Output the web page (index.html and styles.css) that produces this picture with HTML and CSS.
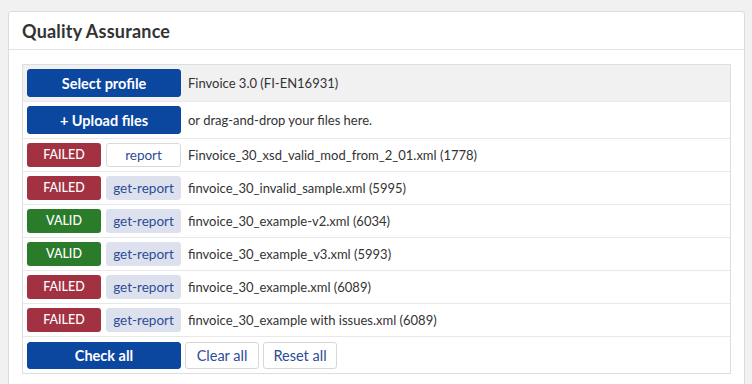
FILE: index.html
```html
<!DOCTYPE html>
<html>
<head>
<meta charset="utf-8">
<link rel="stylesheet" href="styles.css">
</head>
<body>
<section class="card">
  <header class="card-head">Quality Assurance</header>
  <div class="card-body">
    <div class="qa-table">
      <div class="row row-grey row-tall">
        <button class="btn btn-primary">Select profile</button>
        <span class="txt">Finvoice 3.0 (FI-EN16931)</span>
      </div>
      <div class="row row-tall">
        <button class="btn btn-primary">+ Upload files</button>
        <span class="txt">or drag-and-drop your files here.</span>
      </div>
      <div class="row">
        <span class="badge failed">FAILED</span>
        <button class="btn btn-report">report</button>
        <span class="txt">Finvoice_30_xsd_valid_mod_from_2_01.xml (1778)</span>
      </div>
      <div class="row">
        <span class="badge failed">FAILED</span>
        <button class="btn btn-get">get-report</button>
        <span class="txt">finvoice_30_invalid_sample.xml (5995)</span>
      </div>
      <div class="row">
        <span class="badge valid">VALID</span>
        <button class="btn btn-get">get-report</button>
        <span class="txt">finvoice_30_example-v2.xml (6034)</span>
      </div>
      <div class="row">
        <span class="badge valid">VALID</span>
        <button class="btn btn-get">get-report</button>
        <span class="txt">finvoice_30_example_v3.xml (5993)</span>
      </div>
      <div class="row">
        <span class="badge failed">FAILED</span>
        <button class="btn btn-get">get-report</button>
        <span class="txt">finvoice_30_example.xml (6089)</span>
      </div>
      <div class="row">
        <span class="badge failed">FAILED</span>
        <button class="btn btn-get">get-report</button>
        <span class="txt">finvoice_30_example with issues.xml (6089)</span>
      </div>
      <div class="row row-actions">
        <button class="btn btn-primary btn-check">Check all</button>
        <button class="btn btn-light">Clear all</button>
        <button class="btn btn-light">Reset all</button>
      </div>
    </div>
  </div>
</section>
</body>
</html>
```

FILE: styles.css
```css
html, body {
  margin: 0;
  padding: 0;
  background: #f1f1f1;
  font-family: "Lato", "Noto Sans", sans-serif;
  color: #333;
  overflow: hidden;
}
body {
  padding-top: 11px;
}
.card {
  margin: 0 7px 0 8px;
  background: #fff;
  border: 1px solid #dcdcdc;
  border-radius: 3px;
}
.card-head {
  height: 37px;
  line-height: 38px;
  padding: 0 13px;
  font-size: 18px;
  font-weight: 700;
  letter-spacing: 0.2px;
  color: #333;
  border-bottom: 1px solid #e3e3e3;
}
.card-body {
  padding: 14px 13px 20px 13px;
}
.qa-table {
  border: 1px solid #dedede;
}
.row {
  display: flex;
  align-items: center;
  height: 32px;
  padding: 0 4px;
  border-top: 1px solid #e8e8e8;
}
.row:first-child { border-top: 0; }
.row-grey { background: #f1f1f1; }
.row-tall { height: 36px; }
.row-actions { height: 36px; }
.btn {
  font-family: inherit;
  font-size: 14px;
  border-radius: 3px;
  padding: 0;
  cursor: pointer;
}
.btn-primary {
  width: 154px;
  height: 28px;
  background: #0b469f;
  color: #fff;
  border: 1px solid #0b469f;
  font-weight: 700;
  font-size: 14.5px;
}
.btn-check { height: 27px; }
.badge {
  width: 74px;
  height: 24px;
  line-height: 24px;
  text-align: center;
  color: #fff;
  border-radius: 3px;
  font-size: 12.5px;
  font-weight: 500;
}
.failed { background: #a23241; }
.valid { background: #2a7c2b; }
.btn-report, .btn-get {
  width: 75px;
  height: 24px;
  margin-left: 5px;
  font-size: 13.5px;
  color: #2b4c97;
}
.btn-report {
  background: #fff;
  border: 1px solid #dadada;
}
.btn-get {
  background: #dde1ee;
  border: 1px solid #dde1ee;
}
.txt {
  margin-left: 7px;
  font-size: 13px;
  color: #333;
}
.btn-light {
  height: 27px;
  width: 74px;
  margin-left: 4px;
  background: #fff;
  border: 1px solid #d7d7d7;
  color: #2b4c97;
  font-size: 14.5px;
}
```
